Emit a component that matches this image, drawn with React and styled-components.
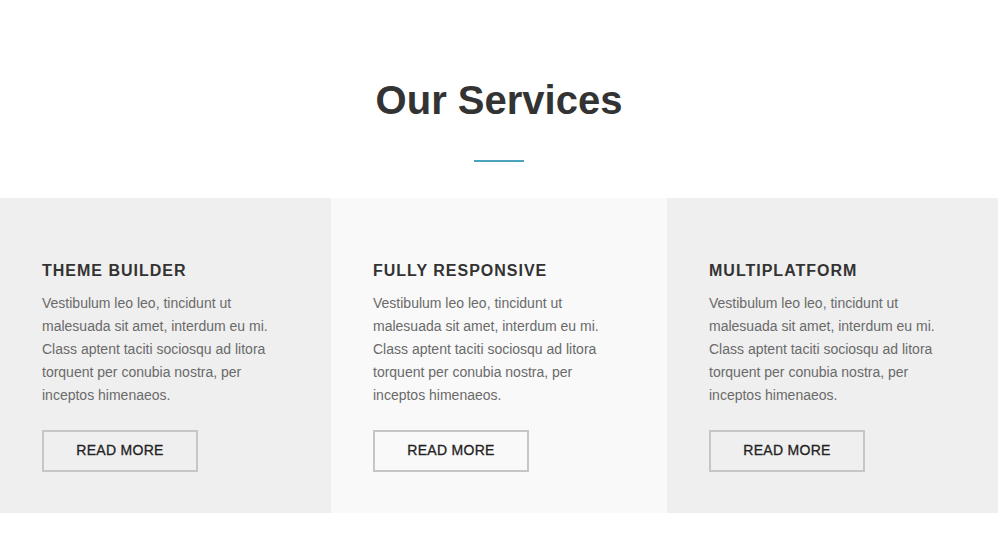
import React from 'react'
import styled, { createGlobalStyle } from 'styled-components'

const GlobalStyle = createGlobalStyle`
    body {
        margin: 0;
        background: #fff;
        font-family: "Liberation Sans", Arial, sans-serif;
    }
`

const services = [
    { title: 'Theme Builder', shade: '#efefef' },
    { title: 'Fully Responsive', shade: '#f9f9f9' },
    { title: 'Multiplatform', shade: '#efefef' },
]

const text = 'Vestibulum leo leo, tincidunt ut malesuada sit amet, interdum eu mi. Class aptent taciti sociosqu ad litora torquent per conubia nostra, per inceptos himenaeos.'

function App() {
    return (
        <Section>
            <GlobalStyle />
            <Header>
                <Title>Our Services</Title>
                <Divider />
            </Header>
            <Grid>
                {services.map(s => (
                    <Card key={s.title} shade={s.shade}>
                        <CardTitle>{s.title}</CardTitle>
                        <CardText>{text}</CardText>
                        <Button href='#'>Read More</Button>
                    </Card>
                ))}
            </Grid>
        </Section>
    )
}

export default App

const Section = styled.section `
    width: 998px;
    height: 556px;
    background: #fff;
`

const Header = styled.div `
    display: flex;
    flex-direction: column;
    align-items: center;
    padding-top: 76px;
    height: 198px;
    box-sizing: border-box;
`

const Title = styled.h2 `
    margin: 0;
    font-size: 40px;
    line-height: 48px;
    font-weight: 700;
    color: #333;
`

const Divider = styled.span `
    display: block;
    width: 50px;
    height: 2px;
    margin-top: 36px;
    background: #4ba4bd;
`

const Grid = styled.div `
    display: grid;
    grid-template-columns: 331px 1fr 331px;
    height: 315px;
`

const Card = styled.div `
    background: ${props => props.shade};
    padding: 63px 42px 0;
`

const CardTitle = styled.h3 `
    margin: 0;
    font-size: 16px;
    line-height: 20px;
    font-weight: 700;
    letter-spacing: 1px;
    text-transform: uppercase;
    color: #333;
`

const CardText = styled.p `
    margin: 11px 0 0;
    font-size: 14px;
    line-height: 23px;
    color: #6a6a6a;
    max-width: 247px;
`

const Button = styled.a `
    display: flex;
    align-items: center;
    justify-content: center;
    box-sizing: border-box;
    width: 156px;
    height: 42px;
    margin-top: 23px;
    padding-bottom: 2px;
    border: 2px solid #c6c6c6;
    font-size: 14px;
    font-weight: 400;
    letter-spacing: 0.3px;
    text-transform: uppercase;
    text-decoration: none;
    color: #222;
    -webkit-text-stroke: 0.3px #222;
`
